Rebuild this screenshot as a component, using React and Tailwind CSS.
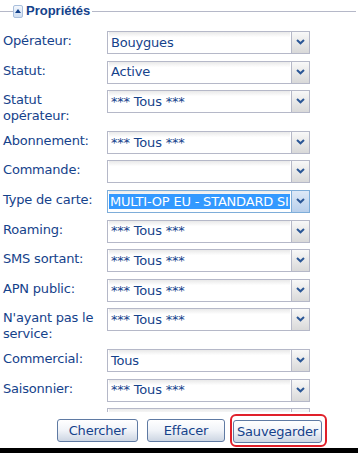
const rows = [
  { label: "Opérateur:", value: "Bouygues" },
  { label: "Statut:", value: "Active" },
  { label: "Statut opérateur:", value: "*** Tous ***" },
  { label: "Abonnement:", value: "*** Tous ***" },
  { label: "Commande:", value: "" },
  { label: "Type de carte:", value: "MULTI-OP EU - STANDARD SIM", focused: true },
  { label: "Roaming:", value: "*** Tous ***" },
  { label: "SMS sortant:", value: "*** Tous ***" },
  { label: "APN public:", value: "*** Tous ***" },
  { label: "N'ayant pas le service:", value: "*** Tous ***" },
  { label: "Commercial:", value: "Tous" },
  { label: "Saisonnier:", value: "*** Tous ***" },
  { label: "", value: "" },
];

function Chevron() {
  return (
    <svg width="9" height="6" viewBox="0 0 9 6">
      <path d="M1 1 L4.5 4.3 L8 1" fill="none" stroke="#2a5696" strokeWidth="2" />
    </svg>
  );
}

function Combo({ value, focused }) {
  return (
    <div
      className={`flex h-[23px] w-[203px] border ${
        focused ? "border-[#7eadd9]" : "border-[#b5b8c8]"
      }`}
    >
      <div className="flex-1 overflow-hidden mx-[1px] flex items-center bg-linear-to-b from-[#e9e9e9] to-white to-25%">
        {focused ? (
          <span className="bg-[#3399ff] text-white leading-[15px] whitespace-nowrap pl-[1px]">
            {value}
          </span>
        ) : (
          <span className="pl-[2px] whitespace-nowrap">{value}</span>
        )}
      </div>
      <div
        className={`w-[18px] border-l flex items-start justify-center pt-[7px] ${
          focused
            ? "border-[#7eadd9] bg-linear-to-b from-[#dde9f7] to-[#b8cfeb]"
            : "border-[#b5b8c8] bg-linear-to-b from-[#f8f8f8] to-[#d9d9d9]"
        }`}
      >
        <Chevron />
      </div>
    </div>
  );
}

function Button({ children, w }) {
  return (
    <button
      className={`${w} h-[23px] rounded-[3px] border border-[#5f7aa3] bg-linear-to-b from-white via-[#f0f3f8] to-[#cdd6e3] text-[#15428b] text-[13px] leading-none`}
    >
      {children}
    </button>
  );
}

export default function App() {
  return (
    <div
      className="w-[358px] h-[453px] bg-white flex flex-col overflow-hidden text-[13px] tracking-[-0.2px] text-[#15428b]"
      style={{ fontFamily: '"DejaVu Sans", Verdana, sans-serif' }}
    >
      {/* legend */}
      <div className="h-[22px] flex items-center shrink-0">
        <div className="w-[13px] h-px bg-[#b5b8c8]" />
        <div className="w-[10px] h-[13px] rounded-[2px] border border-[#a9bfdc] bg-linear-to-b from-[#f3f7fd] to-[#cfdef2] flex items-center justify-center">
          <svg width="6" height="4" viewBox="0 0 6 4">
            <path d="M0 4 L3 0 L6 4 Z" fill="#15428b" />
          </svg>
        </div>
        <span
          className="ml-[3px] mr-[2px] font-bold text-[13px] tracking-normal text-[#15428b]"
          style={{ fontFamily: '"Liberation Sans", Arial, sans-serif' }}
        >
          Propriétés
        </span>
        <div className="flex-1 h-px bg-[#b5b8c8] mr-[2px]" />
      </div>

      {/* form */}
      <div className="h-[390px] overflow-hidden pt-[9px] shrink-0">
        {rows.map((r, i) => (
          <div key={i} className="flex items-start mb-[6.6px]">
            <div className="w-[106px] pl-[3px] pr-[3px] pt-[2px] leading-[16px]">{r.label}</div>
            <div className="ml-[1px]">
              <Combo value={r.value} focused={r.focused} />
            </div>
          </div>
        ))}
      </div>

      {/* buttons */}
      <div className="h-[36px] shrink-0 flex items-center pl-[57px] gap-[9px]">
        <Button w="w-[81px]">Chercher</Button>
        <Button w="w-[78px]">Effacer</Button>
        <div className="border-2 border-[#e0202a] rounded-[6px] pt-[4px] pb-[2px] pl-[1px] pr-[3px] -ml-[4px]">
          <Button w="w-[89px]">Sauvegarder</Button>
        </div>
      </div>

      <div className="flex-1 bg-black" />
    </div>
  );
}
